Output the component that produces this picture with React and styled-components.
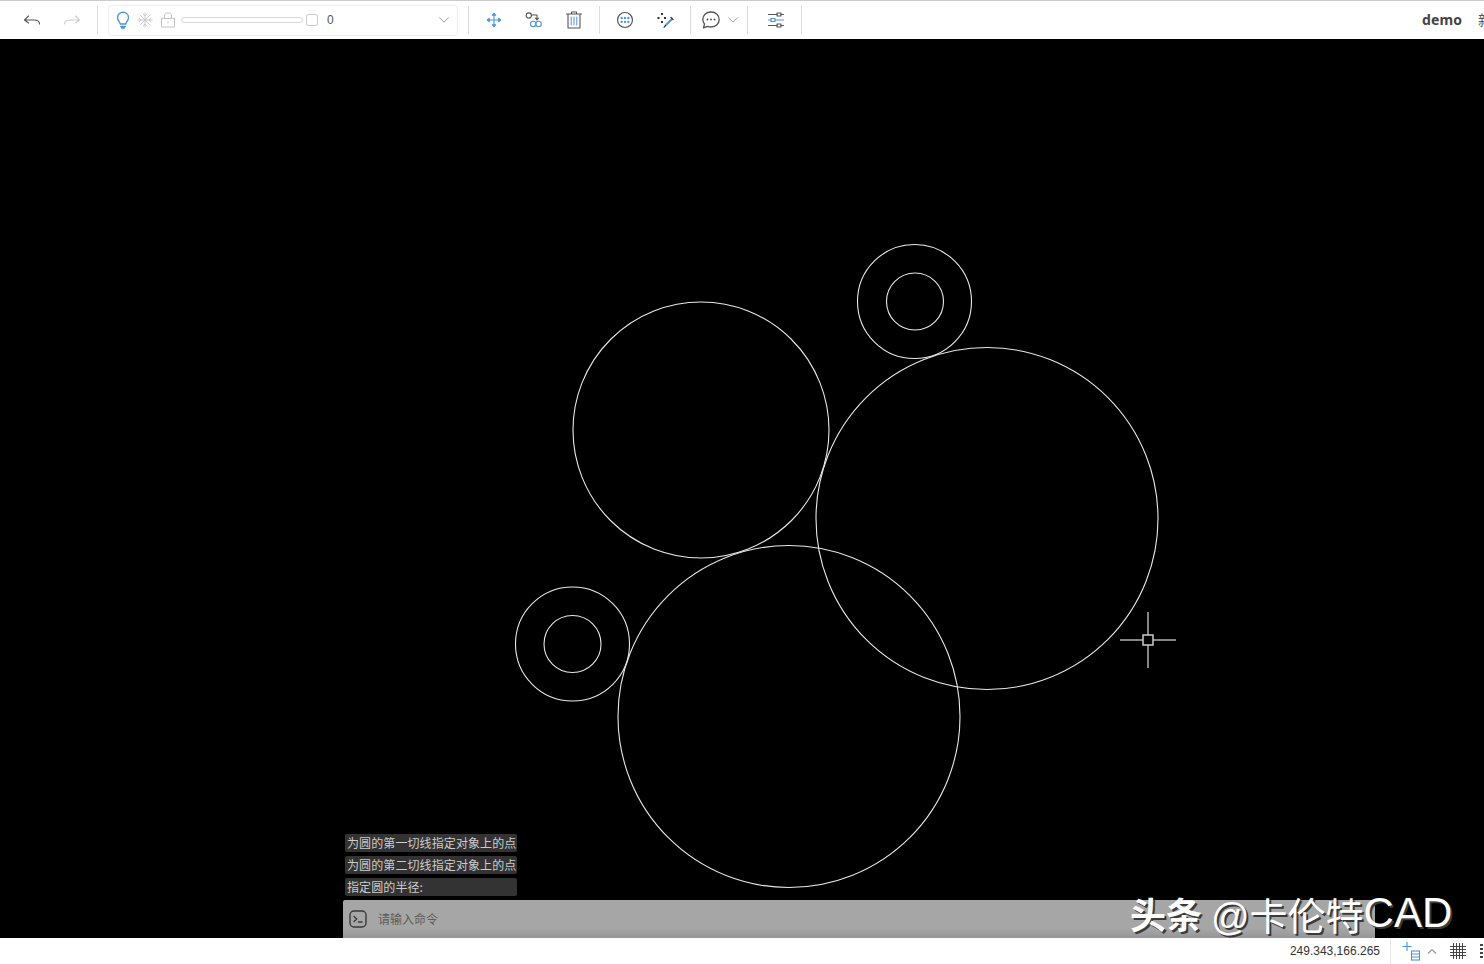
import styled, { createGlobalStyle } from "styled-components";

const GlobalStyle = createGlobalStyle`
  html, body {
    margin: 0;
    padding: 0;
    overflow: hidden;
    background: #fff;
    font-family: "Liberation Sans", "Noto Sans CJK SC", sans-serif;
  }
`;

const BLUE = "#4d94e0";
const DARK = "#555";
const LIGHT = "#c4c4c4";

const circles = [
  { cx: 914.5, cy: 301.5, r: 57 },
  { cx: 915, cy: 301.5, r: 28.5 },
  { cx: 701, cy: 430, r: 128 },
  { cx: 987, cy: 518.5, r: 171 },
  { cx: 789, cy: 716.5, r: 171 },
  { cx: 572.5, cy: 644, r: 57 },
  { cx: 572.5, cy: 644, r: 28.5 },
];

const messages = [
  "为圆的第一切线指定对象上的点",
  "为圆的第二切线指定对象上的点",
  "指定圆的半径:",
];

const Icon = ({ size = 20, children, stroke = DARK }) => (
  <svg width={size} height={size} viewBox="0 0 20 20" fill="none" stroke={stroke} strokeWidth="1.1" strokeLinecap="round" strokeLinejoin="round">
    {children}
  </svg>
);

const Chevron = ({ up, small }) => (
  <svg width={small ? 12 : 14} height="10" viewBox="0 0 14 10" fill="none" stroke="#999" strokeWidth="1.1">
    <path d={up ? "M3 7.5 7 3.5 11 7.5" : "M1.5 2 7 7.5 12.5 2"} />
  </svg>
);

const App = () => {
  return (
    <>
      <GlobalStyle />
      <Page>
        <Toolbar>
          <ToolBtn>
            <Icon>
              <path d="M6.5 6 2.5 10 6.5 13M2.5 10H12C15 10 17.5 11.5 17.5 14" />
            </Icon>
          </ToolBtn>
          <ToolBtn>
            <Icon stroke="#ccc">
              <path d="M13.5 6 17.5 10 13.5 13M17.5 10H8C5 10 2.5 11.5 2.5 14" />
            </Icon>
          </ToolBtn>
          <Sep $left={5} />

          <LayerBox>
            <LayerSlot>
              <svg width="14" height="18" viewBox="0 0 14 18" fill="none" stroke={BLUE} strokeWidth="1.4" strokeLinecap="round">
                <path d="M4.3 13C3.8 10.8 1.5 9.6 1.5 6.5 1.5 3.4 4 1.3 7 1.3S12.5 3.4 12.5 6.5C12.5 9.6 10.2 10.8 9.7 13Z" />
                <path d="M4.8 15.5H9.2M5.6 17H8.4" strokeWidth="1.6" />
              </svg>
            </LayerSlot>
            <LayerSlot>
              <Icon stroke={LIGHT} size={16}>
                <path d="M10 1V19M1 10H19M3.600 3.600 16.400 16.400M16.400 3.600 3.600 16.400M7.500 2.500 10 5 12.500 2.500M7.500 17.500 10 15 12.500 17.500M2.500 7.500 5 10 2.500 12.500M17.500 7.500 15 10 17.500 12.500" />
              </Icon>
            </LayerSlot>
            <LockSlot>
              <svg width="16" height="16" viewBox="0 0 16 16" fill="none" stroke={LIGHT} strokeWidth="1">
                <rect x="1.500" y="6.500" width="13" height="8.500" />
                <path d="M4.500 6.500V4C4.500 2.200 6 1 8 1S11.500 2.200 11.500 4V6.500M8 9.500V11.500" />
              </svg>
            </LockSlot>
            <SliderTrack />
            <ColorBox />
            <LayerName>0</LayerName>
            <LayerArrow>
              <Chevron small />
            </LayerArrow>
          </LayerBox>

          <Sep $left={10} $right={5} />
          <ToolBtn>
            <Icon stroke={BLUE}>
              <path d="M10 3.500V16.500M3.500 10H16.500" />
              <path d="M8.300 5.300 10 3.300 11.700 5.300ZM8.300 14.700 10 16.700 11.700 14.700ZM5.300 8.300 3.300 10 5.300 11.700ZM14.700 8.300 16.700 10 14.700 11.700Z" fill={BLUE} />
            </Icon>
          </ToolBtn>
          <ToolBtn>
            <Icon>
              <circle cx="4.800" cy="5.500" r="2.600" />
              <path d="M7.500 5H13V9.500M11.300 8 13 10 14.700 8" />
              <circle cx="9.200" cy="14" r="2.700" stroke={BLUE} />
              <circle cx="14.600" cy="14" r="2.700" stroke={BLUE} />
            </Icon>
          </ToolBtn>
          <ToolBtn>
            <Icon>
              <path d="M2.500 4H17.500M7.500 4V2H12.500V4M4 4V18H16V4" />
              <path d="M7.200 7V15M10 7V15M12.800 7V15" stroke={BLUE} strokeWidth="1" />
            </Icon>
          </ToolBtn>
          <Sep $left={5} $right={5} />

          <ToolBtn>
            <Icon size={18}>
              <circle cx="10" cy="10" r="8.300" strokeWidth="1.300" />
              <g fill={BLUE} stroke="none">
                <circle cx="6.300" cy="7.800" r="1.300" />
                <circle cx="10" cy="7.800" r="1.300" />
                <circle cx="13.700" cy="7.800" r="1.300" />
                <circle cx="6.300" cy="12" r="1.300" />
                <circle cx="10" cy="12" r="1.300" />
                <circle cx="13.700" cy="12" r="1.300" />
              </g>
            </Icon>
          </ToolBtn>
          <ToolBtn>
            <Icon>
              <g fill="#333" stroke="none">
                <rect x="6" y="3" width="2" height="2" />
                <rect x="2.500" y="7" width="2" height="2" />
                <rect x="9" y="7" width="2" height="2" />
                <rect x="6" y="11" width="2" height="2" />
              </g>
              <path d="M10.500 15.500 16.500 9.500" stroke={BLUE} strokeWidth="2" />
              <path d="M16 7.500 18 9.500" stroke="#333" strokeWidth="1.300" />
              <path d="M9 17.300 10.500 15.500" stroke="#333" />
            </Icon>
          </ToolBtn>
          <Sep $left={5} />

          <CommentBtn>
            <Icon>
              <path d="M10 2C5 2 1.800 5.500 1.800 9.500 1.800 11.300 2.500 12.800 3.500 14L2.500 17.800 6.500 16.300C7.500 16.800 8.800 17 10 17 15 17 18.200 13.500 18.200 9.500S15 2 10 2Z" strokeWidth="1.300" />
              <g fill="#444" stroke="none">
                <circle cx="6.500" cy="9.500" r="0.900" />
                <circle cx="10" cy="9.500" r="0.900" />
                <circle cx="13.500" cy="9.500" r="0.900" />
              </g>
            </Icon>
          </CommentBtn>
          <CommentArrow>
            <Chevron small />
          </CommentArrow>
          <Sep $left={8} $right={8} />

          <ToolBtn>
            <Icon>
              <path d="M2.500 4.500H11M15 4.500H17.500M2.500 15.500H11M15 15.500H17.500" />
              <rect x="11" y="3" width="4" height="3" />
              <rect x="11" y="14" width="4" height="3" />
              <path d="M2.500 10H5M9 10H17.500" stroke={BLUE} />
              <rect x="5" y="8.500" width="4" height="3" stroke={BLUE} />
            </Icon>
          </ToolBtn>
          <Sep $left={5} />

          <UserArea>
            <UserName>demo</UserName>
            <NewLabel>新</NewLabel>
          </UserArea>
        </Toolbar>

        <Canvas>
          <Drawing viewBox="0 39 1484 899">
            {circles.map((c, i) => (
              <circle key={i} cx={c.cx} cy={c.cy} r={c.r} fill="none" stroke="#e8e8e8" strokeWidth="1.100" />
            ))}
            <g stroke="#b0b0b0" strokeWidth="1.500" fill="none">
              <path d="M1120 640H1143M1153 640H1176M1148 612V635M1148 645V668" />
              <rect x="1143" y="635" width="10" height="10" stroke="#ccc" />
            </g>
          </Drawing>

          <CommandArea>
            {messages.map((m) => (
              <Message key={m}>{m}</Message>
            ))}
            <CommandBar>
              <svg width="20" height="20" viewBox="0 0 20 20" fill="none" stroke="#3a3a3a" strokeWidth="1.400" strokeLinecap="round" strokeLinejoin="round">
                <rect x="2" y="2" width="16" height="16" rx="4" />
                <path d="M6 7.500 8.700 10 6 12.500M10.500 13H14" />
              </svg>
              <CommandHint>请输入命令</CommandHint>
            </CommandBar>
          </CommandArea>

          <Watermark>
            <WatermarkBrand>头条</WatermarkBrand>
            <WatermarkName>@卡伦特</WatermarkName>
            <WatermarkLatin>CAD</WatermarkLatin>
          </Watermark>
        </Canvas>

        <StatusBar>
          <Coords>249.343,166.265</Coords>
          <StatusSep />
          <svg width="20" height="22" viewBox="0 0 20 22" fill="none" stroke={BLUE} strokeWidth="1.100">
            <path d="M6 2V11M1.500 6.500H10.500" />
            <rect x="10.500" y="11" width="8" height="9" />
            <path d="M10.500 14H18.500M10.500 17H18.500" />
          </svg>
          <StatusChevron>
            <Chevron up />
          </StatusChevron>
          <GridBtn>
            <svg width="16" height="16" viewBox="0 0 16 16" fill="none" stroke="#444" strokeWidth="1">
              <path d="M3.500 0V16M6.500 0V16M9.500 0V16M12.500 0V16M0 3.500H16M0 6.500H16M0 9.500H16M0 12.500H16" />
            </svg>
          </GridBtn>
          <MoreBtn>
            <svg width="4" height="16" viewBox="0 0 4 16" fill="#444">
              <rect x="0" y="1" width="3" height="2" />
              <rect x="0" y="5" width="3" height="2" />
              <rect x="0" y="9" width="3" height="2" />
              <rect x="0" y="13" width="3" height="2" />
            </svg>
          </MoreBtn>
        </StatusBar>
      </Page>
    </>
  );
};

export default App;

const Page = styled.div`
  width: 100%;
  height: 100vh;
  display: flex;
  flex-direction: column;
  overflow: hidden;
`;

const Toolbar = styled.header`
  height: 38px;
  flex: none;
  box-sizing: content-box;
  border-top: 1px solid #ccc;
  padding-left: 12px;
  display: flex;
  align-items: center;
  background: #fff;
`;

const ToolBtn = styled.div`
  width: 40px;
  height: 30px;
  flex: none;
  display: flex;
  align-items: center;
  justify-content: center;
`;

const CommentBtn = styled(ToolBtn)`
  width: 30px;
  margin-left: 5px;
  margin-right: 1px;
`;

const CommentArrow = styled.div`
  width: 12px;
  display: flex;
`;

const Sep = styled.div`
  width: 1px;
  height: 28px;
  flex: none;
  background: #ddd;
  margin-left: ${(p) => p.$left || 0}px;
  margin-right: ${(p) => p.$right || 0}px;
`;

const LayerBox = styled.div`
  box-sizing: border-box;
  width: 350px;
  height: 31px;
  flex: none;
  margin-left: 10px;
  padding-left: 3px;
  display: flex;
  align-items: center;
  border: 1px solid #eee;
  border-radius: 3px;
`;

const LayerSlot = styled.div`
  width: 22px;
  height: 22px;
  display: flex;
  align-items: center;
  justify-content: center;
`;

const LockSlot = styled(LayerSlot)`
  padding-left: 2px;
  box-sizing: border-box;
`;

const SliderTrack = styled.div`
  box-sizing: border-box;
  width: 122px;
  height: 6px;
  margin-left: 3px;
  background: #fff;
  border: 1px solid #d9d9d9;
  border-radius: 3px;
`;

const ColorBox = styled.div`
  box-sizing: border-box;
  width: 12px;
  height: 12px;
  margin-left: 3px;
  border: 1px solid #ccc;
  border-radius: 2px;
`;

const LayerName = styled.span`
  margin-left: 9px;
  font-size: 12px;
  color: #555;
`;

const LayerArrow = styled.div`
  margin-left: auto;
  margin-right: 7px;
  display: flex;
`;

const UserArea = styled.div`
  margin-left: auto;
  padding-bottom: 2px;
  display: flex;
  align-items: center;
  overflow: hidden;
`;

const UserName = styled.span`
  font-family: "Noto Sans", sans-serif;
  font-size: 14px;
  font-weight: 700;
  letter-spacing: 0.1px;
  color: #444;
  margin-right: 16px;
`;

const NewLabel = styled.span`
  font-family: "Noto Sans CJK SC", sans-serif;
  font-size: 14px;
  color: #555;
  width: 6px;
  overflow: hidden;
  white-space: nowrap;
`;

const Canvas = styled.main`
  position: relative;
  flex: 1;
  background: #000;
  overflow: hidden;
`;

const Drawing = styled.svg`
  position: absolute;
  inset: 0;
  width: 100%;
  height: 100%;
`;

const CommandArea = styled.div`
  position: absolute;
  left: 343px;
  bottom: 0;
  width: 1032px;
  display: flex;
  flex-direction: column;
  gap: 4px;
`;

const Message = styled.div`
  box-sizing: border-box;
  width: 172px;
  height: 18px;
  margin-left: 2px;
  padding-left: 2px;
  background: #333;
  border-radius: 2px;
  font-family: "Noto Sans CJK SC", sans-serif;
  font-size: 12px;
  letter-spacing: 0.1px;
  line-height: 18px;
  color: #ccc;
  white-space: nowrap;
`;

const CommandBar = styled.div`
  height: 38px;
  padding-left: 5px;
  display: flex;
  align-items: center;
  background: linear-gradient(to bottom, #a6a6a6 0, #a6a6a6 75%, #969696 100%);
  border-radius: 2px 2px 0 0;
`;

const CommandHint = styled.span`
  margin-left: 10px;
  padding-bottom: 2px;
  font-family: "Noto Sans CJK SC", sans-serif;
  font-size: 12px;
  color: #5c5c5c;
`;

const Watermark = styled.div`
  position: absolute;
  left: 1130px;
  bottom: 3px;
  height: 44px;
  display: flex;
  align-items: center;
  color: #fff;
  white-space: nowrap;
  text-shadow: 2px 2px 0 #3a3a3a;
`;

const WatermarkBrand = styled.span`
  font-family: "Noto Sans CJK SC", sans-serif;
  font-size: 36px;
  font-weight: 700;
`;

const WatermarkName = styled.span`
  margin-left: 9px;
  font-family: "Liberation Sans", "Noto Sans CJK SC", sans-serif;
  font-size: 38px;
`;

const WatermarkLatin = styled.span`
  font-family: "Liberation Sans", sans-serif;
  font-size: 42px;
`;

const StatusBar = styled.footer`
  height: 26px;
  flex: none;
  display: flex;
  align-items: center;
  justify-content: flex-end;
  background: #fff;
`;

const Coords = styled.span`
  font-size: 12px;
  color: #333;
`;

const StatusSep = styled.div`
  width: 1px;
  height: 26px;
  margin: 0 10px 0 10px;
  background: #e6e6e6;
`;

const StatusChevron = styled.div`
  margin-left: 4px;
  display: flex;
`;

const GridBtn = styled.div`
  margin-left: 11px;
  display: flex;
`;

const MoreBtn = styled.div`
  width: 4px;
  margin-left: 14px;
  display: flex;
`;
